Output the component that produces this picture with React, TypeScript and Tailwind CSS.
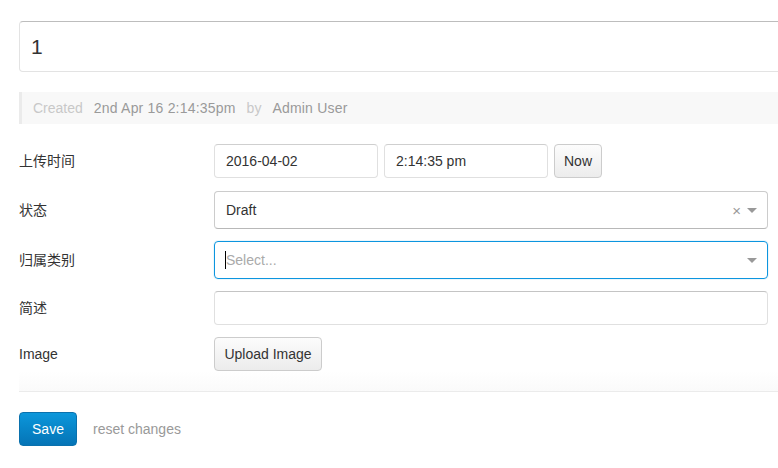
import { ChangeEvent, useState } from "react";

const font = "font-['Liberation_Sans','Noto_Sans_CJK_SC',sans-serif]";

function FieldRow({
  label,
  height,
  className = "",
  children,
}: {
  label: string;
  height: string;
  className?: string;
  children: React.ReactNode;
}) {
  return (
    <div className={`flex items-center ${height} ${className}`}>
      <label className="w-[195px] shrink-0 text-[14px] text-[#333]">{label}</label>
      <div className="flex h-full w-[554px] items-center">{children}</div>
    </div>
  );
}

function SelectArrow() {
  return (
    <span className="ml-[6px] h-0 w-0 border-x-[5px] border-t-[5px] border-x-transparent border-t-[#999]" />
  );
}

export default function App() {
  const [title, setTitle] = useState("1");
  const [date, setDate] = useState("2016-04-02");
  const [time, setTime] = useState("2:14:35 pm");
  const [summary, setSummary] = useState("");

  const onChange =
    (setter: (value: string) => void) => (event: ChangeEvent<HTMLInputElement>) =>
      setter(event.target.value);

  return (
    <div className={`h-[468px] w-[778px] overflow-hidden bg-white ${font}`}>
      <div className="ml-[19px] w-[820px] pt-[21px]">
        <input
          value={title}
          onChange={onChange(setTitle)}
          className="block h-[51px] w-full rounded-l-[4px] border border-[#e3e3e3] border-t-[#bdbdbd] pl-[11px] pr-[12px] text-[21px] text-[#333] outline-none"
        />

        <div className="mt-[20px] flex h-[32px] items-center gap-[11px] border-l-[3px] border-[#ebebeb] bg-[#f8f8f8] pl-[11px] text-[14px]">
          <span className="text-[#c8c8c8]">Created</span>
          <span className="tracking-[0.2px] text-[#9a9a9a]">2nd Apr 16 2:14:35pm</span>
          <span className="text-[#c8c8c8]">by</span>
          <span className="tracking-[0.2px] text-[#9a9a9a]">Admin User</span>
        </div>

        <div className="mt-[20px]">
          <FieldRow label="上传时间" height="h-[34px]" className="mb-[13px]">
            <input
              value={date}
              onChange={onChange(setDate)}
              className="h-full w-[164px] rounded-[4px] border border-[#e0e0e0] border-t-[#cfcfcf] px-[11px] text-[14px] text-[#333] outline-none"
            />
            <input
              value={time}
              onChange={onChange(setTime)}
              className="ml-[6px] h-full w-[164px] rounded-[4px] border border-[#e0e0e0] border-t-[#cfcfcf] px-[11px] text-[14px] text-[#333] outline-none"
            />
            <button
              type="button"
              className="ml-[6px] h-full w-[48px] rounded-[4px] border border-[#ccc] bg-gradient-to-b from-[#fcfcfc] to-[#ececec] text-[14px] text-[#333]"
            >
              Now
            </button>
          </FieldRow>

          <FieldRow label="状态" height="h-[38px]" className="mb-[12px]">
            <div className="flex h-full w-full items-center rounded-[4px] border border-[#ccc] border-b-[#b8b8b8] pl-[11px] pr-[10px] text-[14px] text-[#333]">
              <span className="flex-1">Draft</span>
              <span className="text-[15px] leading-none text-[#999]">×</span>
              <SelectArrow />
            </div>
          </FieldRow>

          <FieldRow label="归属类别" height="h-[38px]" className="mb-[12px]">
            <div className="flex h-full w-full items-center rounded-[4px] border border-[#0c95df] pl-[10px] pr-[10px] text-[14px] shadow-[0_0_0_1px_rgba(12,149,223,0.08)]">
              <span className="h-[18px] w-px bg-black" />
              <span className="flex-1 text-[#aaa]">Select...</span>
              <SelectArrow />
            </div>
          </FieldRow>

          <FieldRow label="简述" height="h-[34px]" className="mb-[12px]">
            <input
              value={summary}
              onChange={onChange(setSummary)}
              className="h-full w-full rounded-[4px] border border-[#e0e0e0] border-t-[#c4c4c4] px-[11px] text-[14px] text-[#333] outline-none"
            />
          </FieldRow>

          <FieldRow label="Image" height="h-[34px]">
            <button
              type="button"
              className="h-full w-[108px] rounded-[4px] border border-[#ccc] bg-gradient-to-b from-[#fcfcfc] to-[#ececec] text-[14px] text-[#333]"
            >
              Upload Image
            </button>
          </FieldRow>
        </div>

        <div className="h-[20px] bg-gradient-to-b from-white to-[#fafafa]" />
        <hr className="border-0 border-t border-[#ebebeb]" />

        <div className="mt-[20px] flex items-center">
          <button
            type="button"
            className="h-[34px] w-[58px] rounded-[4px] border border-[#0a71ad] bg-gradient-to-b from-[#0c97db] to-[#0574b6] text-[14px] text-white"
          >
            Save
          </button>
          <button type="button" className="ml-[16px] text-[14px] text-[#999]">
            reset changes
          </button>
        </div>
      </div>
    </div>
  );
}
